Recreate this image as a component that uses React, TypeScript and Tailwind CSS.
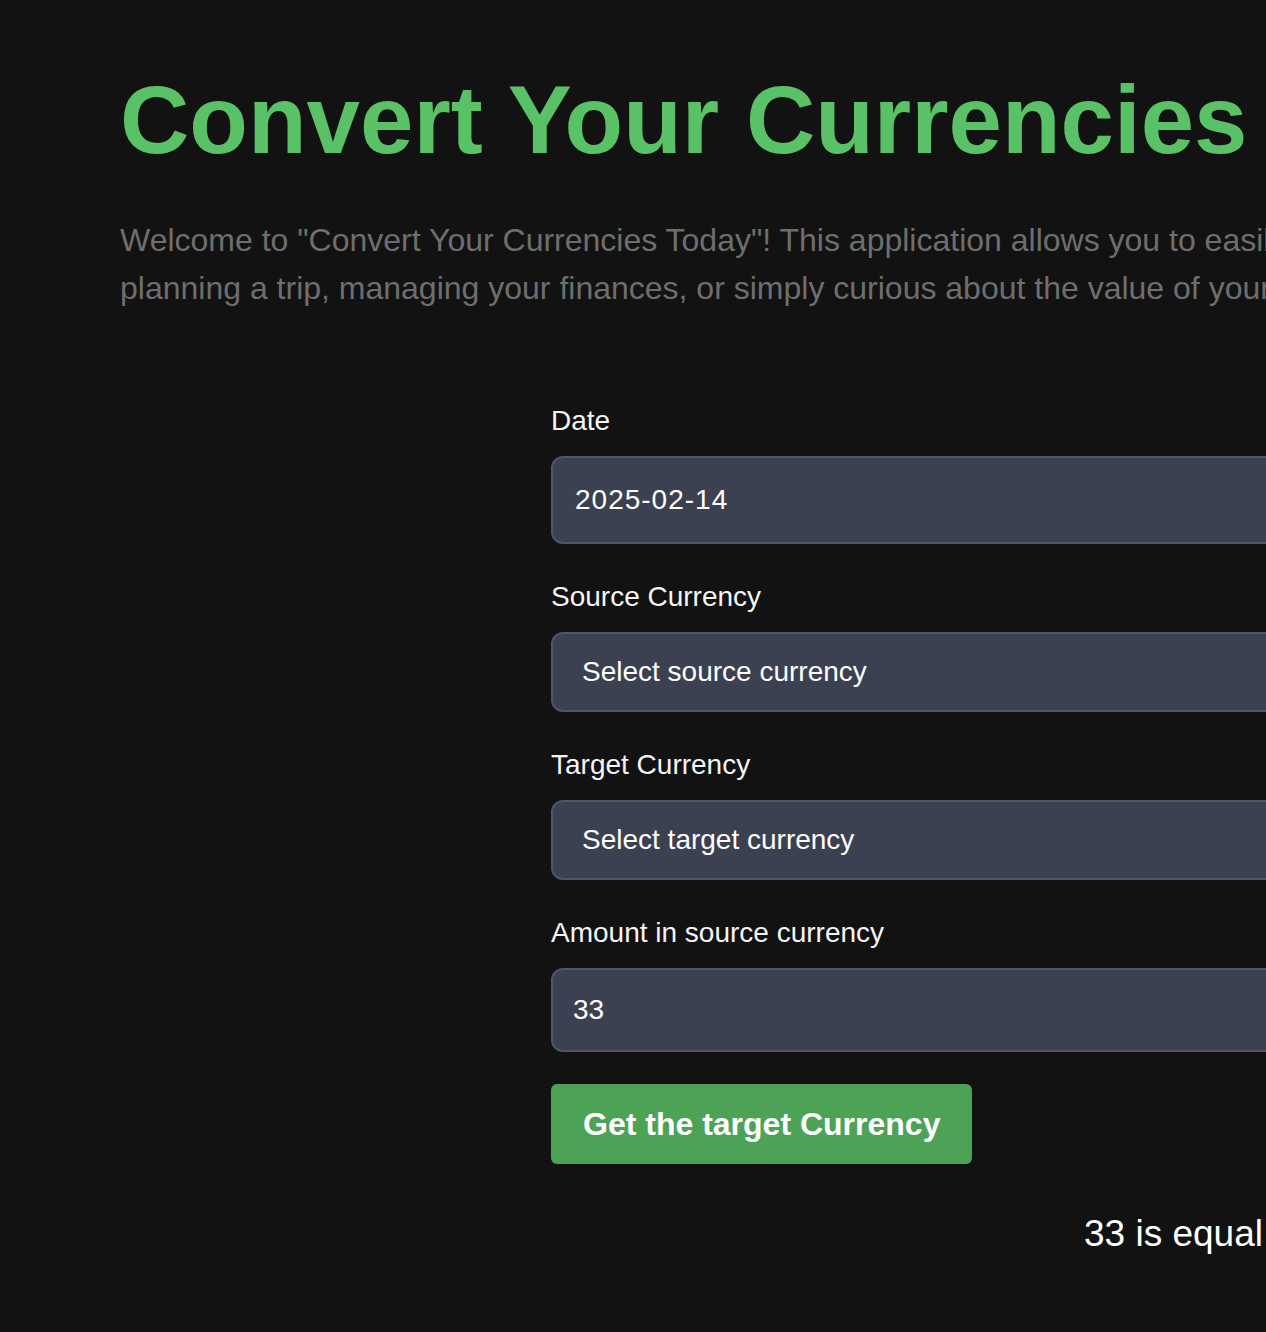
import React from "react";

export default function App() {
  return (
    <div
      className="w-full min-h-screen overflow-hidden bg-[#121212]"
      style={{ fontFamily: '"Liberation Sans", Arial, Helvetica, sans-serif' }}
    >
      <div className="w-[2400px] pl-[120px] pt-[72px] pb-[80px]">
        <h1 className="text-[96px] leading-[96px] font-bold text-[#5ac266] whitespace-nowrap">
          Convert Your Currencies Today
        </h1>
        <p className="mt-[48px] text-[32px] leading-[48px] text-[#6e6e6e] whitespace-nowrap">
          Welcome to "Convert Your Currencies Today"! This application allows you to easily convert between different currencies using the latest exchange rates. Whether you are
          <br />
          planning a trip, managing your finances, or simply curious about the value of your money in another currency, this tool has you covered.
        </p>

        <div className="ml-[431px] mt-[93px] w-[1200px] flex flex-col">
          <label className="block text-[28px] leading-[32px] text-[#f5f5f5] mb-[19px]">Date</label>
          <div className="h-[88px] flex items-center rounded-[12px] border-2 border-[#4f5667] bg-[#3b4151] pl-[22px] text-[28px] text-white tracking-[1px]">
            2025-02-14
          </div>

          <label className="block mt-[37px] text-[28px] leading-[32px] text-[#f5f5f5] mb-[19px]">Source Currency</label>
          <div className="h-[80px] flex items-center rounded-[12px] border-2 border-[#4f5667] bg-[#3b4151] pl-[29px] text-[28px] text-white">
            Select source currency
          </div>

          <label className="block mt-[37px] text-[28px] leading-[32px] text-[#f5f5f5] mb-[19px]">Target Currency</label>
          <div className="h-[80px] flex items-center rounded-[12px] border-2 border-[#4f5667] bg-[#3b4151] pl-[29px] text-[28px] text-white">
            Select target currency
          </div>

          <label className="block mt-[37px] text-[28px] leading-[32px] text-[#f5f5f5] mb-[19px]">Amount in source currency</label>
          <div className="h-[84px] flex items-center rounded-[12px] border-2 border-[#4f5667] bg-[#3b4151] pl-[20px] text-[28px] text-white">
            33
          </div>

          <div className="mt-[32px]">
            <button className="h-[80px] px-[32px] rounded-[6px] bg-[#4ca356] text-white text-[32px] font-bold">
              Get the target Currency
            </button>
          </div>

          <div className="mt-[49px] ml-[533px] text-[37px] leading-[42px] text-white whitespace-nowrap">
            33 is equal to 31.68 EUR
          </div>
        </div>
      </div>
    </div>
  );
}
